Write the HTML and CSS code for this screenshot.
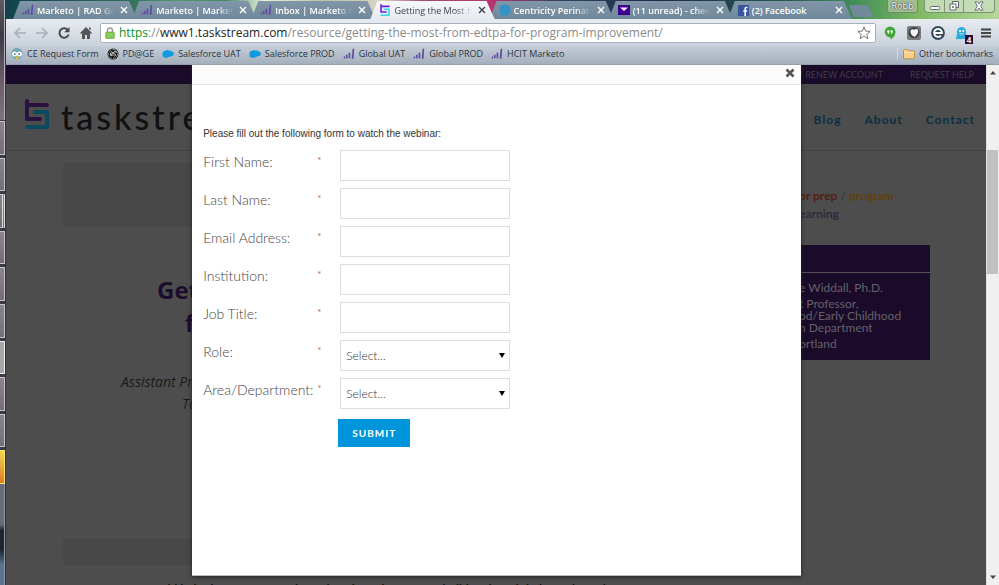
FILE: index.html
```html
<!DOCTYPE html>
<html lang="en">
<head>
<meta charset="utf-8">
<title>Getting the Most from edTPA</title>
<link rel="stylesheet" href="styles.css">
</head>
<body>
<svg class="defs" aria-hidden="true">
  <symbol id="marketo" viewBox="0 0 12 12"><g fill="#5f4ba0"><path d="M.8 8.6h1.4v1.8H.8zM3 6.6l1.6.4v3L3 10.4zM5.6 4.6l1.7.3v5.2l-1.7.5zM9.6 1l1.6-.4-.6 10-1.9.5z"/></g></symbol>
  <symbol id="taskstream" viewBox="0 0 24 30"><g fill="none" stroke-width="4" stroke-linecap="round" stroke-linejoin="round"><path class="ts-top" d="M2 2v18h13M2 6h20"/><path class="ts-bottom" d="M10 13h12v15H2"/></g></symbol>
  <symbol id="close" viewBox="0 0 8 8"><path d="M1 1l6 6M7 1L1 7" fill="none" stroke="currentColor" stroke-width="1.4"/></symbol>
  <symbol id="cloud" viewBox="0 0 12 9"><path d="M3 8C1 8 .3 6.700.5 5.200 0 3 1.500 1 3.500 1.300 4.500.2 6 .4 6.700 1.300 8 .5 9.200 1 9.600 1.900 11.200 1.800 12 3.200 11.800 4.500 11.600 6.300 10 6.900 8.800 6.600 8.200 7.600 7 7.800 6.200 7.400 5.500 8.600 3.800 8.800 3 8z" fill="#0f9be0"/></symbol>
</svg>

<div class="taskbar" aria-hidden="true">
  <div class="taskbar-top"></div>
  <div class="taskbar-items"><i></i><i class="cool"></i><i class="split"></i><i></i><i></i><i class="cool"></i><i class="bright"></i><i></i><i class="cool"></i><i class="hot"></i></div>
  <div class="taskbar-end"></div>
</div>

<div class="browser">
  <div class="tabstrip">
    <div class="tabs">
      <div class="tab"><svg class="fav"><use href="#marketo"/></svg><span>Marketo | RAD Gen</span><button aria-label="Close tab"><svg><use href="#close"/></svg></button></div>
      <div class="tab"><svg class="fav"><use href="#marketo"/></svg><span>Marketo | Marketin</span><button aria-label="Close tab"><svg><use href="#close"/></svg></button></div>
      <div class="tab"><svg class="fav"><use href="#marketo"/></svg><span>Inbox | Marketo Ma</span><button aria-label="Close tab"><svg><use href="#close"/></svg></button></div>
      <div class="tab active"><svg class="fav neon"><use href="#taskstream"/></svg><span>Getting the Most fr</span><button aria-label="Close tab"><svg><use href="#close"/></svg></button></div>
      <div class="tab"><svg class="fav" viewBox="0 0 12 12"><circle cx="6" cy="6" r="5.500" fill="#1b9bd8"/><circle cx="6" cy="6" r="4.300" fill="none" stroke="#5c86a4" stroke-width=".6"/><path d="M3 7c1 1 2.500-1 2.500-2.500S3 4.500 3.500 6s2 2 2.500.5M6.500 7.500C8 9 9.500 7 8 6s-2.500 0-1-2 3 0 1.500 1" fill="none" stroke="#5c86a4" stroke-width=".8"/></svg><span>Centricity Perinatal</span><button aria-label="Close tab"><svg><use href="#close"/></svg></button></div>
      <div class="tab"><svg class="fav" viewBox="0 0 12 12"><path d="M0 1h12v10H0z" fill="#400090"/><path d="M2 3.500h8L6 7z" fill="#f4effa"/></svg><span>(11 unread) - chees</span><button aria-label="Close tab"><svg><use href="#close"/></svg></button></div>
      <div class="tab"><svg class="fav" viewBox="0 0 12 12"><path d="M1 1h11v11H1z" fill="#3a559f"/><path d="M10.500 3.500H9.200Q8.200 3.500 8.200 4.600V12M6.300 7h4" fill="none" stroke="#fff" stroke-width="1.600"/></svg><span>(2) Facebook</span><button aria-label="Close tab"><svg><use href="#close"/></svg></button></div>
    </div>
    <button class="new-tab" aria-label="New tab"></button>
    <button class="profile">Robb</button>
    <div class="window-controls">
      <button aria-label="Minimize"><svg viewBox="0 0 12 10"><rect x="1.500" y="5.500" width="9" height="3" rx="1" fill="#fff" stroke="#5d6570"/></svg></button>
      <button aria-label="Restore"><svg viewBox="0 0 12 10"><path d="M4.500 3V.5h6v6H8" fill="#fff" stroke="#5d6570"/><path d="M2 3h6v6H2z" fill="#fff" stroke="#5d6570"/><path d="M4.500 5.500h1v1h-1z" fill="none" stroke="#5d6570"/></svg></button>
      <button class="wide" aria-label="Close"><svg viewBox="0 0 12 10"><path d="M2 .8h2.500L6 3 7.500.8H10L7.600 5 10 9.200H7.500L6 7 4.500 9.200H2L4.400 5z" fill="#fff" stroke="#5d6570" stroke-width=".9"/></svg></button>
    </div>
  </div>

  <div class="toolbar">
    <button aria-label="Back"><svg viewBox="0 0 14 14"><path d="M13 7H2M7 2L2 7l5 5" fill="none" stroke="#a9aeb6" stroke-width="1.600"/></svg></button>
    <button aria-label="Forward"><svg viewBox="0 0 14 14"><path d="M1 7h11M7 2l5 5-5 5" fill="none" stroke="#a9aeb6" stroke-width="1.600"/></svg></button>
    <button aria-label="Reload"><svg viewBox="0 0 14 14"><path d="M10.800 4A4.700 4.700 0 1 0 11.600 8.500" fill="none" stroke="#494949" stroke-width="2"/><path d="M12.500 1v5.300H7.200z" fill="#494949"/></svg></button>
    <button aria-label="Home"><svg viewBox="0 0 14 14"><path d="M7 1l6 6-1 1-1-1v6H8V9H6v4H3V7L2 8 1 7zM10 1.500h1.600v3L10 3z" fill="#555"/></svg></button>
    <label class="address">
      <svg class="lock" viewBox="0 0 10 12"><path d="M2.500 6V3.500a2.500 2.500 0 0 1 5 0V6" fill="none" stroke="#999" stroke-width="1.300"/><rect x=".7" y="5" width="8.600" height="6.500" rx=".8" fill="#7cc84c" stroke="#58a033" stroke-width=".6"/><path d="M1.500 7.200h7M1.500 9.200h7" stroke="#a4de7c" stroke-width=".6"/></svg>
      <span class="url"><b>https</b>://<strong>www1.taskstream.com</strong>/resource/getting-the-most-from-edtpa-for-program-improvement/</span>
      <svg class="star" viewBox="0 0 14 14"><path d="M7 .9l1.700 4.200 4.500.3-3.500 2.900 1.200 4.400L7 10.300l-3.900 2.400 1.200-4.400L.8 5.400l4.500-.3z" fill="#fff" stroke="#777"/></svg>
    </label>
    <div class="extensions">
      <svg viewBox="0 0 16 16"><path d="M8 1.500a5.500 5.500 0 0 1 5.500 5.500c0 3.500-2.500 6-5 7.500v-2A5.500 5.500 0 1 1 8 1.500z" fill="#3fa535"/><path d="M5.300 5.300h2v2.200l-1 1.500h-.6l.4-1.600h-.8zM8.600 5.300h2v2.200l-1 1.500H9l.4-1.600h-.8z" fill="#fff"/></svg>
      <svg viewBox="0 0 16 16"><rect x="1" y="1" width="14" height="14" rx="2" fill="#777b7e"/><circle cx="8" cy="7.500" r="5.500" fill="#3c4043"/><path d="M4.500 5.500Q6 3.500 8 4.800q2.500-1.800 4 .2 1 3.500-3.500 7Q4 9.500 4.500 5.500z" fill="#f5f5f5"/></svg>
      <svg viewBox="0 0 16 16"><circle cx="8" cy="8" r="6.900" fill="#344a5c"/><path d="M11 10.600A4 4 0 1 1 12 8H5" fill="none" stroke="#fff" stroke-width="1.800"/></svg>
      <span class="ghost"><svg viewBox="0 0 16 16"><path d="M3 7a4.500 4.500 0 0 1 9-1c0 4 .5 6 1.500 8-2-.8-2.500.3-4 0-1.500-.8-2.500.8-4 0-1.500 0-2.500.5-4-.2C2.800 12 3 9 3 7z" fill="#2badde"/><circle cx="6" cy="6" r="1.100" fill="#fff"/><circle cx="9.200" cy="6" r="1.100" fill="#fff"/><path d="M5.500 8.500q2 1.500 4 0" fill="none" stroke="#fff" stroke-width=".8"/></svg><b>4</b></span>
      <button aria-label="Menu"><svg viewBox="0 0 16 16"><path d="M3 4.500h10M3 8h10M3 11.500h10" stroke="#444" stroke-width="2"/></svg></button>
    </div>
  </div>

  <nav class="bookmarks" aria-label="Bookmarks">
    <a href="#"><svg viewBox="0 0 12 12"><circle cx="6" cy="5.500" r="5.500" fill="#6ba8b3"/><circle cx="3.600" cy="6" r="2.500" fill="#fff"/><circle cx="8.400" cy="6" r="2.500" fill="#fff"/><circle cx="3.800" cy="6" r="1" fill="#689"/><circle cx="8.200" cy="6" r="1" fill="#689"/><path d="M4.500 8.500h3L6.500 12h-1z" fill="#f3bd1c"/></svg>CE Request Form</a>
    <a href="#"><svg viewBox="0 0 12 12"><circle cx="6" cy="6" r="5.500" fill="#171717"/><circle cx="6" cy="6" r="4.500" fill="none" stroke="#ccd3db" stroke-width=".6" stroke-dasharray="3 1"/><path d="M3 7c1 1 2.500-1 2.500-2.500S3 4.500 3.500 6s2 2 2.500.5M6.500 7.500C8 9 9.500 7 8 6s-2.500 0-1-2 3 0 1.500 1" fill="none" stroke="#fff" stroke-width=".8"/></svg>PD@GE</a>
    <a href="#"><svg viewBox="0 0 12 9"><use href="#cloud"/></svg>Salesforce UAT</a>
    <a href="#"><svg viewBox="0 0 12 9"><use href="#cloud"/></svg>Salesforce PROD</a>
    <a href="#"><svg><use href="#marketo"/></svg>Global UAT</a>
    <a href="#"><svg><use href="#marketo"/></svg>Global PROD</a>
    <a href="#"><svg><use href="#marketo"/></svg>HCIT Marketo</a>
    <a href="#" class="other"><svg viewBox="0 0 12 12"><path d="M.5 2.500q0-1 1-1h3l1 1.300h5q1 0 1 1V10q0 .8-1 .8h-9q-1 0-1-.8z" fill="#f8cf86" stroke="#bd8433" stroke-width=".8"/><path d="M1 4.500h10" stroke="#fff0c6" stroke-width=".8"/></svg>Other bookmarks</a>
  </nav>

  <div class="viewport">
    <div class="page">
      <div class="utility"><a href="#">/ RENEW ACCOUNT</a><a href="#">REQUEST HELP</a></div>
      <header class="site-header">
        <a class="brand" href="#"><svg><use href="#taskstream"/></svg><span>taskstre</span></a>
        <nav><a href="#">Blog</a><a href="#">About</a><a href="#">Contact</a></nav>
      </header>
      <main class="content">
        <section class="hero">
          <div class="band"></div>
          <div class="hero-text">
            <h1>Get<br><span>f</span></h1>
            <p>Assistant Pr<br><span>To</span></p>
          </div>
          <div class="band short"></div>
        </section>
        <aside>
          <p class="tags"><b class="red">or prep</b> / <b class="gold">program</b><br><b class="violet">earning</b></p>
          <div class="speaker">
            <div class="speaker-head"></div>
            <div class="speaker-body">
              <p>e Widdall, Ph.D.</p>
              <p>t Professor,<br>od/Early Childhood<br>n Department</p>
              <p>ortland</p>
            </div>
          </div>
        </aside>
      </main>
      <p class="summary">Would help the most from edTPA data, learn how teams build on it and their results today</p>

      <div class="modal" role="dialog" aria-label="Webinar form">
        <div class="modal-bar"><button aria-label="Close"><svg viewBox="0 0 10 10"><path d="M1.500 1.500l7 7M8.500 1.500l-7 7" stroke="#555" stroke-width="2.600"/></svg></button></div>
        <form>
          <p>Please fill out the following form to watch the webinar:</p>
          <div class="row"><label for="first">First Name:</label><i>*</i><input id="first" type="text"></div>
          <div class="row"><label for="last">Last Name:</label><i>*</i><input id="last" type="text"></div>
          <div class="row"><label for="email">Email Address:</label><i>*</i><input id="email" type="email"></div>
          <div class="row"><label for="inst">Institution:</label><i>*</i><input id="inst" type="text"></div>
          <div class="row"><label for="job">Job Title:</label><i>*</i><input id="job" type="text"></div>
          <div class="row"><label for="role">Role:</label><i>*</i><div class="select"><select id="role"><option>Select...</option></select></div></div>
          <div class="row"><label for="area">Area/Department:</label><i>*</i><div class="select"><select id="area"><option>Select...</option></select></div></div>
          <button class="submit" type="button">SUBMIT</button>
        </form>
      </div>
    </div>
    <div class="scrollbar" aria-hidden="true">
      <svg viewBox="0 0 8 5"><path d="M1 4.500h6L4 1z" fill="#444"/></svg>
      <div class="track"><div class="thumb"></div></div>
      <svg viewBox="0 0 8 5"><path d="M1 .5h6L4 4z" fill="#444"/></svg>
    </div>
  </div>
</div>
</body>
</html>
```
FILE: styles.css
```css
* { box-sizing: border-box; }
body {
  margin: 0;
  height: 100vh;
  display: flex;
  overflow: hidden;
  font-family: "Open Sans", sans-serif;
  background: #4d4d4d;
}
p, h1 { margin: 0; }
a { color: inherit; text-decoration: none; }
button { border: 0; padding: 0; background: none; font: inherit; color: inherit; }
svg { display: block; flex: none; }
.defs { position: absolute; width: 0; height: 0; }

/* Desktop taskbar edge */
.taskbar {
  width: 6px;
  flex: none;
  display: flex;
  flex-direction: column;
  background: #3b3943;
  border-right: 1px solid #2f3138;
}
.taskbar-top { height: 120px; border-right: 1px solid #b5b0b9; background: linear-gradient(#5a5a64, #3c3b44 30%, #6b5b66 65%, #7f7180); }
.taskbar-items { height: 364px; display: flex; flex-direction: column; gap: 3px; padding-top: 1px; }
.taskbar-items i { flex: 1; border: 1px solid #c9c3cc; border-left: 0; background: linear-gradient(#8d8390, #776b78); }
.taskbar-items .cool { background: linear-gradient(#85858f, #6f707c); }
.taskbar-items .split { border-right: 3px double #ddd; }
.taskbar-items .bright { background: #aaa5ab; border-color: #f1f1f1; }
.taskbar-items .hot { background: linear-gradient(#efd84c, #e2772b); border-color: #ffe873; }
.taskbar-end { flex: 1; border-right: 1px solid #8d95a2; background: linear-gradient(#6a6b78 40%, #1d2630 46%, #1d2630 65%, #5a7390 80%); }

.browser { flex: 1; min-width: 0; display: flex; flex-direction: column; }

/* Tabs */
.tabstrip {
  height: 19px;
  display: flex;
  padding: 0 4px 0 7px;
  background: linear-gradient(90deg, #12434d, #2f6b5c 12%, #4f9a6a 17%, #3f8a63 22%, #e9f0dc 26%, #b9c4a8 32%, #d9d3c8 38%, #a04a70 42%, #b8346e 49%, #2b4560 56%, #1e2c4c 66%, #26564e 78%, #3f8a56 85%, #7fba62 92%, #b6d79c);
}
.tabs { flex: 1; min-width: 0; display: flex; }
.tab {
  position: relative;
  z-index: 0;
  flex: 1;
  min-width: 0;
  display: flex;
  align-items: center;
  padding: 1px 4px 0 9px;
  color: #fff;
  font-size: 9px;
  font-weight: 600;
}
.tab::before {
  content: "";
  position: absolute;
  z-index: -1;
  inset: 1px -5px 0 0;
  background: linear-gradient(#8196a8, #70889b);
  clip-path: polygon(0 100%, 7px 0, calc(100% - 8px) 0, 100% 100%);
}
.tab.active { z-index: 1; color: #3c4450; font-weight: 400; }
.tab.active::before { background: linear-gradient(#f6f8fa, #e6eaef); }
.fav { width: 12px; height: 12px; margin-right: 3px; }
.neon { --ts-top: #6a1df0; --ts-bottom: #38d5e8; }
.ts-top { stroke: var(--ts-top); }
.ts-bottom { stroke: var(--ts-bottom); }
.tab span { flex: 1; min-width: 0; overflow: hidden; white-space: nowrap; mask-image: linear-gradient(90deg, #000 80%, transparent); }
.tab:last-child span { mask-image: none; }
.tab button { width: 8px; margin: 0 0 0 6px; }
.tab button svg { width: 8px; height: 8px; }
.new-tab { flex: none; width: 24px; height: 12px; margin: 5px 14px 0 2px; background: #71899b; clip-path: polygon(0 0, 80% 0, 100% 100%, 20% 100%); }
.profile { flex: none; width: 31px; height: 13px; margin-right: 6px; border: 1px solid #6d8d62; border-top: 0; border-radius: 0 0 3px 3px; background: #a2bd92; color: #fff; font-size: 9px; line-height: 12px; text-shadow: 0 0 2px #333, 0 0 1px #333; }
.window-controls { flex: none; height: 13px; display: flex; border: 1px solid #7b9278; border-top: 0; border-radius: 0 0 4px 4px; background: #c4dcb4; }
.window-controls button { width: 19px; display: grid; place-items: center; }
.window-controls button + button { border-left: 1px solid #7b9278; }
.window-controls .wide { width: 31px; }
.window-controls svg { width: 12px; height: 10px; }

/* Toolbar */
.toolbar { height: 27px; display: flex; align-items: center; padding: 0 5px 0 7px; background: linear-gradient(#e8ecf1, #c9d1db); }
.toolbar > button { width: 14px; margin-right: 8px; }
.toolbar > button svg { width: 14px; height: 14px; }
.toolbar > button:nth-of-type(4) { margin-right: 7px; }
.address { flex: 1; min-width: 0; height: 20px; display: flex; align-items: center; padding: 0 4px; background: #fff; border: 1px solid #a7b0bc; border-radius: 2px; font-size: 12px; color: #8b8b8b; }
.lock { width: 10px; height: 12px; margin-right: 4px; }
.url { flex: 1; white-space: nowrap; overflow: hidden; }
.url b { color: #0a9418; font-weight: 400; }
.url strong { color: #222; font-weight: 400; }
.star { width: 14px; height: 14px; }
.extensions { display: flex; gap: 8px; margin-left: 6px; }
.extensions svg { width: 16px; height: 16px; }
.ghost { position: relative; }
.ghost b { position: absolute; right: -3px; bottom: -3px; width: 8px; height: 9px; background: #2a0d33; color: #fff; font-size: 8px; line-height: 9px; text-align: center; }

/* Bookmarks */
.bookmarks { height: 19px; display: flex; align-items: center; gap: 8px; padding: 0 6px 3px 5px; background: linear-gradient(#c5cdd7, #a3afbc); border-bottom: 1px solid #949faa; font-size: 9px; color: #2c3440; white-space: nowrap; }
.bookmarks a { display: flex; align-items: center; gap: 4px; }
.bookmarks svg { width: 12px; height: 12px; }
.bookmarks .other { margin-left: auto; padding-left: 5px; border-left: 1px solid #d4dae1; }

/* Page below the overlay */
.viewport { flex: 1; min-height: 0; display: flex; }
.page { position: relative; flex: 1; min-width: 0; overflow: hidden; background: #4d4d4d; font-family: Lato, sans-serif; }
.utility { height: 19px; display: flex; justify-content: flex-end; align-items: center; gap: 27px; padding-right: 12px; background: #190b29; color: #423b48; font-size: 9px; }
.site-header { height: 67px; display: flex; justify-content: space-between; padding: 15px 11px 0 19px; border-bottom: 1px solid #424242; }
.brand { display: flex; gap: 12px; color: #111; font-size: 34px; font-weight: 500; line-height: 36px; letter-spacing: 3px; --ts-top: #2a1140; --ts-bottom: #0a4a63; }
.brand svg { width: 24px; height: 30px; }
.site-header nav { display: flex; gap: 23px; color: #0a2f43; font-size: 12px; font-weight: 700; line-height: 42px; letter-spacing: 1px; }
.content { display: flex; justify-content: space-between; padding: 12px 56px 0 57px; }
.hero { width: 400px; }
.band { height: 64px; background: #484848; }
.band.short { height: 26px; }
.hero-text { height: 312px; padding: 46px 0 0 57px; border-left: 1px solid #4b4b4b; }
.hero-text h1 { padding-left: 36px; color: #1c0d2c; font: 700 24px/33px "Open Sans", sans-serif; }
.hero-text h1 span { padding-left: 28px; }
.hero-text p { padding-top: 32px; color: #1b1b1b; font: italic 14px/22px "Open Sans", sans-serif; }
.hero-text p span { padding-left: 61px; }
aside { width: 137px; padding-top: 24px; }
.tags { padding-left: 6px; color: #333; font-size: 12px; line-height: 18px; }
.red { color: #541c12; }
.gold { color: #60400e; }
.violet { color: #30293d; }
.speaker { margin-top: 22px; background: #190b29; color: #65606b; font-size: 12px; line-height: 12px; }
.speaker-head { height: 28px; border-bottom: 1px solid #55505a; }
.speaker-body { padding: 9px 0 10px 6px; white-space: nowrap; }
.speaker-body p { margin-bottom: 4px; }
.speaker-body p:last-child { margin-bottom: 0; }
.summary { padding: 16px 0 0 136px; color: #111; font-size: 12px; font-weight: 700; white-space: nowrap; }

/* Modal */
.modal { position: absolute; top: 0; left: 19%; right: 18.9%; height: 98.2%; background: #fff; border-bottom: 1px solid #bbb; box-shadow: 0 1px 4px #222; }
.modal-bar { height: 20px; display: flex; justify-content: flex-end; padding: 3px 6px 0 0; background: #fcfcfc; border-bottom: 1px solid #e3e3e3; }
.modal-bar button, .modal-bar svg { width: 10px; height: 10px; }
.modal form { padding: 42px 11px 0; }
.modal form p { margin-bottom: 10px; color: #333; font: 10px/13px "Liberation Sans", sans-serif; }
.row { display: grid; grid-template-columns: 114px 23px 170px; margin-bottom: 7px; color: #444; font-size: 14px; font-weight: 300; }
.row label { line-height: 23px; white-space: nowrap; }
.row i { color: #b56a6a; font: 10px/21px Lato, sans-serif; }
.row input, .row select { width: 100%; height: 31px; padding: 0 5px; border: 1px solid #dededa; border-radius: 0; background: #fff; color: #333; font: 300 12px Lato, sans-serif; appearance: none; }
.select { position: relative; }
.select::after { content: ""; position: absolute; right: 5px; top: 13px; border: 3px solid transparent; border-top: 5px solid #000; border-bottom: 0; pointer-events: none; }
.submit { width: 72px; height: 28px; margin: 3px 0 0 135px; background: #0095da; color: #fff; font-size: 10px; font-weight: 700; letter-spacing: 1px; }

/* Scrollbar */
.scrollbar { width: 13px; display: flex; flex-direction: column; align-items: center; padding: 5px 0; background: #f0f0f0; border-left: 1px solid #e0e0e0; }
.scrollbar svg { width: 8px; height: 5px; }
.track { flex: 1; align-self: stretch; padding: 75px 1px 0 0; }
.thumb { height: 124px; background: #c1c1c1; }
```
